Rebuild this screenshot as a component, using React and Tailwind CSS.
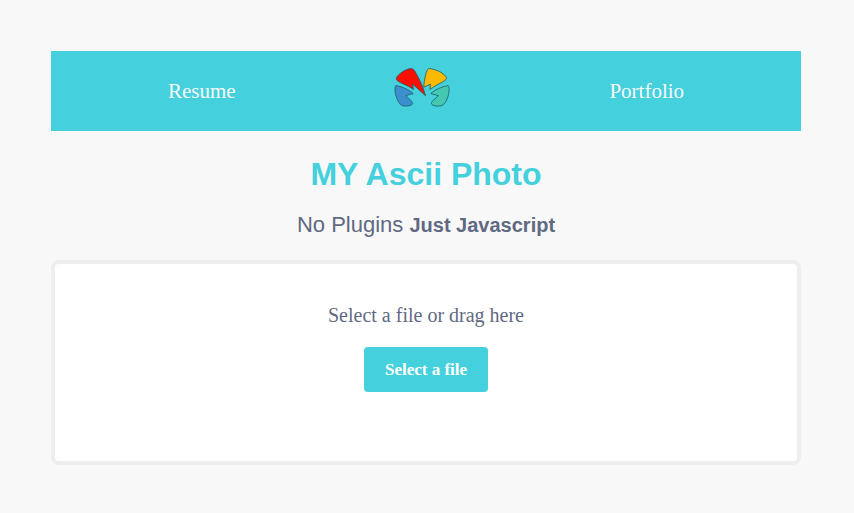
import { useRef } from "react";

function Logo() {
  return (
    <svg viewBox="0 0 58 42" className="h-[42px] w-[58px]" aria-hidden="true">
      <g stroke="#1f5a63" strokeWidth="0.8" strokeLinejoin="round">
        <path fill="#3b8fce" d="M2.8 18.6C1.6 20 1.7 25 3.3 30C5 35 7.3 38 9.6 38.8C12.5 39.3 15.5 39.2 18 38.2C20 37.2 20 36 18.8 34.4L12.8 28.6L20.2 26.6C17 23.4 10 19.6 2.8 18.6Z" />
        <path fill="#45c8b0" d="M55.2 18.6C56.4 20 56.4 25 54.8 30C53.2 35 50.8 38 48 38.8C45.5 39.3 42.5 39.2 40 38.2C38 37.2 38 36 39.2 34.4L45.4 28.6L37.8 26.6C41.2 23.4 48 19.6 55.2 18.6Z" />
        <path fill="#fbb900" d="M36.5 1.6C43 2.4 50 5.6 53 9.6C53.8 11 53.5 12.2 52.2 13.2C49 15.8 42 18.4 37 22.4L37.4 17.2L30.8 20.2C31 13 33 5 34.7 2.4C35.2 1.7 35.7 1.5 36.5 1.6Z" />
        <path fill="#fa1000" d="M4 13.4C3 12.3 3.2 10.8 4.2 9.4C8 5 14 1.8 17.6 1.6C19.2 1.5 20.4 2.2 21.2 3.2C24 7.4 29.5 17.4 32.6 28.8L19.8 17.2L20.4 22.4C15.6 18.4 7.5 16.5 4 13.4Z" />
      </g>
    </svg>
  );
}

function NavBar() {
  return (
    <nav className="flex h-20 items-center justify-evenly bg-[#44d0dd] text-[21px] text-[#f8f8f8]">
      <a href="#resume" className="pt-0.5">Resume</a>
      <a href="#home" aria-label="Home" className="flex w-[140px] justify-center pb-1.5">
        <Logo />
      </a>
      <a href="#portfolio" className="pt-0.5">Portfolio</a>
    </nav>
  );
}

function DropZone() {
  const fileInput = useRef(null);

  return (
    <section
      className="mt-5 flex min-h-[205px] flex-col items-center rounded-lg border-4 border-[#eeeeee] bg-white pt-[39px]"
      onDragOver={(event) => event.preventDefault()}
      onDrop={(event) => event.preventDefault()}
    >
      <label htmlFor="photo" className="text-xl leading-6">
        Select a file or drag here
      </label>
      <input ref={fileInput} id="photo" type="file" accept="image/*" className="hidden" />
      <button
        type="button"
        onClick={() => fileInput.current.click()}
        className="mt-5 rounded bg-[#44d0dd] px-[21px] py-3 text-[17px] leading-[21px] font-bold text-white"
      >
        Select a file
      </button>
    </section>
  );
}

export default function App() {
  return (
    <div className="min-h-screen bg-[#f8f8f8] py-[51px] pr-[53px] pl-[51px] font-['Liberation_Serif','Times_New_Roman',serif] text-[#5f6982]">
      <NavBar />
      <header className="text-center font-['Liberation_Sans',Arial,sans-serif]">
        <h1 className="mt-6 text-[32px] leading-[38px] font-bold text-[#44d0dd]">MY Ascii Photo</h1>
        <p className="mt-[18px] pb-px text-[22px] leading-7">
          No Plugins <strong className="text-xl leading-7">Just Javascript</strong>
        </p>
      </header>
      <DropZone />
    </div>
  );
}
